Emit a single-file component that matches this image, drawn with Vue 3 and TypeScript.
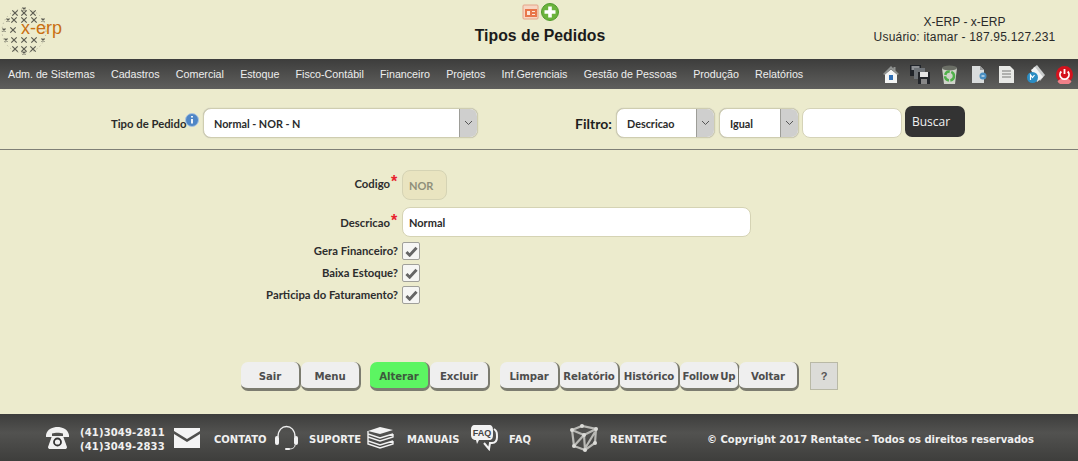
<script setup lang="ts">
const menu: string[] = ['Adm. de Sistemas','Cadastros','Comercial','Estoque','Fisco-Contábil','Financeiro','Projetos','Inf.Gerenciais','Gestão de Pessoas','Produção','Relatórios']
const checks: string[] = ['Gera Financeiro?','Baixa Estoque?','Participa do Faturamento?']
const crosses: {x:number;y:number;r:number}[] = []
const rows: [number, number[]][] = [
  [7,[24]],[11,[15,24,33]],[18,[8,14,24,34,43]],[28,[4,13]],[38,[6,14,24,34,43]],[47,[15,24,33]],[51,[24]]
]
for (const [y, xs] of rows) for (const x of xs) {
  const edge = x < 9 || x > 42 || y < 9 || y > 49
  crosses.push({x, y, r: edge ? 1.5 : 2.7})
}
</script>

<template>
  <div class="page">
    <header class="top">
      <div class="logo">
        <svg width="64" height="56" viewBox="0 0 64 56">
          <circle cx="24" cy="29" r="22" fill="none" stroke="#a9a894" stroke-width="1" stroke-dasharray="1 3"/>
          <g stroke="#5c5c52" stroke-width="1.200" fill="none">
            <path v-for="(c,i) in crosses" :key="i" :d="`M${c.x-c.r} ${c.y-c.r}L${c.x+c.r} ${c.y+c.r}M${c.x+c.r} ${c.y-c.r}L${c.x-c.r} ${c.y+c.r}`" />
          </g>
        </svg>
        <span class="logo-text">x-erp</span>
      </div>
      <div class="center">
        <div class="center-icons">
          <svg width="18" height="18" viewBox="0 0 18 18">
            <rect x="1" y="2" width="15" height="14" rx="1" fill="#f7d6c2" stroke="#e5a488"/>
            <rect x="3" y="6" width="12" height="8" fill="#e8764a"/>
            <path d="M5 8h3v4H5zM10 8h3v1h-3zM10 11h3v1h-3z" fill="#fbe6d8"/>
          </svg>
          <svg width="18" height="18" viewBox="0 0 18 18">
            <circle cx="9" cy="9" r="8.500" fill="#6cb33c" stroke="#4f9a2c"/>
            <path d="M7.200 3.500h3.600v3.700h3.700v3.600h-3.700v3.700H7.200v-3.700H3.500V7.200h3.700z" fill="#fff"/>
          </svg>
        </div>
        <h1>Tipos de Pedidos</h1>
      </div>
      <div class="user">
        <div>X-ERP - x-ERP</div>
        <div class="user-line">Usuário: itamar - 187.95.127.231</div>
      </div>
    </header>

    <nav class="nav">
      <a v-for="m in menu" :key="m">{{ m }}</a>
      <div class="nav-icons">
        <svg width="18" height="19" viewBox="0 0 18 19"><path d="M9 1 1 9l1.500 1L9 4l6.500 6L17 9 13.500 5.500V2h-2v1.500z" fill="#8f9290"/><path d="M3 9.500 9 4.500l6 5V18H3z" fill="#f4f5f4"/><rect x="7" y="10" width="4" height="5" fill="#2f6fb5"/></svg>
        <svg width="20" height="19" viewBox="0 0 20 19"><rect x="0" y="0" width="11" height="11" fill="#20242a"/><rect x="1.500" y="1" width="8" height="4" fill="#8d9094"/><rect x="4" y="3" width="11" height="11" fill="#6e7378"/><rect x="8" y="7" width="12" height="12" fill="#23262b"/><rect x="10" y="7" width="8" height="5" fill="#e6e6e6"/><rect x="11" y="14" width="6" height="5" fill="#888"/></svg>
        <svg width="17" height="19" viewBox="0 0 17 19"><path d="M1 3h15l-2 16H3z" fill="#cfd3c9"/><ellipse cx="8.500" cy="3" rx="7.500" ry="2.500" fill="#6b6f66"/><circle cx="8.500" cy="11" r="4.500" fill="none" stroke="#4fb04a" stroke-width="2.500" stroke-dasharray="6 1.500"/></svg>
        <svg width="17" height="19" viewBox="0 0 17 19"><path d="M1 1h8l4 4v13H1z" fill="#d9dcdc"/><path d="M9 1v4h4z" fill="#9a9c9c"/><circle cx="12" cy="11" r="3.500" fill="#4a8fc2"/><path d="M10.500 11h3" stroke="#fff"/></svg>
        <svg width="15" height="19" viewBox="0 0 15 19"><path d="M0 1h11l4 4v13H0z" fill="#e8e9e6"/><path d="M3 6h9M3 9h9M3 12h9" stroke="#9d9f9c" stroke-width="1.500"/></svg>
        <svg width="18" height="19" viewBox="0 0 18 19"><path d="M6 3 10 0l8 10-5 6z" fill="#c9cccc"/><path d="M4 5 8 2l8 10-6 5z" fill="#f2f3f3"/><circle cx="5.500" cy="12.500" r="5.500" fill="#2b8dc4"/><path d="M3.500 15V10l2 2.500 2-2.500" stroke="#fff" fill="none" stroke-width="1.200"/></svg>
        <svg width="17" height="19" viewBox="0 0 17 19"><circle cx="8.500" cy="9.500" r="8.500" fill="#d5121d"/><path d="M8.500 13a8.500 8.500 0 0 0-7 3.500 8.500 8.500 0 0 0 14 0 8.500 8.500 0 0 0-7-3.500" fill="#f08088"/><path d="M5.300 6.500a4.500 4.500 0 1 0 6.400 0" fill="none" stroke="#fff" stroke-width="1.800"/><path d="M8.500 4v5" stroke="#fff" stroke-width="1.800"/></svg>
      </div>
    </nav>

    <section class="filters">
      <label class="tipo">Tipo de Pedido</label>
      <svg class="info" width="14" height="14" viewBox="0 0 14 14"><circle cx="7" cy="7" r="6.500" fill="#4f86c6" stroke="#a9c3e0"/><path d="M7 3v1.500M7 6v4.500" stroke="#fff" stroke-width="1.800"/></svg>
      <div class="select sel-tipo"><span>Normal - NOR - N</span><i class="arrow"><svg width="9" height="6" viewBox="0 0 9 6"><path d="m1 1 3.500 3.500L8 1" fill="none" stroke="#555" stroke-width="1"/></svg></i></div>
      <label class="filtro">Filtro:</label>
      <div class="select sel-desc"><span>Descricao</span><i class="arrow"><svg width="9" height="6" viewBox="0 0 9 6"><path d="m1 1 3.500 3.500L8 1" fill="none" stroke="#555" stroke-width="1"/></svg></i></div>
      <div class="select sel-igual"><span>Igual</span><i class="arrow"><svg width="9" height="6" viewBox="0 0 9 6"><path d="m1 1 3.500 3.500L8 1" fill="none" stroke="#555" stroke-width="1"/></svg></i></div>
      <div class="search"></div>
      <button class="buscar">Buscar</button>
    </section>

    <main class="form">
      <div class="row r-cod">
        <label class="lbl">Codigo<b class="req">*</b></label>
        <div class="field cod">NOR</div>
      </div>
      <div class="row r-desc">
        <label class="lbl">Descricao<b class="req">*</b></label>
        <div class="field desc">Normal</div>
      </div>
      <div v-for="c in checks" :key="c" class="row r-check">
        <label class="lbl">{{ c }}</label>
        <div class="check"><svg width="13" height="11" viewBox="0 0 14 12"><path d="m1.500 6.500 3.500 3.500 7.500-8" fill="none" stroke="#666" stroke-width="3.200"/></svg></div>
      </div>
    </main>

    <section class="actions">
      <button class="btn">Sair</button>
      <button class="btn">Menu</button>
      <button class="btn green g1">Alterar</button>
      <button class="btn">Excluir</button>
      <button class="btn g2">Limpar</button>
      <button class="btn">Relatório</button>
      <button class="btn">Histórico</button>
      <button class="btn">Follow Up</button>
      <button class="btn g3">Voltar</button>
      <button class="help">?</button>
    </section>

    <footer class="foot">
      <svg class="f-phone" width="25" height="24" viewBox="0 0 25 24"><path d="M1 9C2 3 8 1 12.500 1S23 3 24 9v2h-6V7.500C15 6.500 10 6.500 7 7.500V11H1z" fill="#f1f1f1"/><path d="M7 10h11l4 11c0 1.500-1 2-2 2H5c-1 0-2-.5-2-2z" fill="#f1f1f1"/><circle cx="12.500" cy="16" r="3.500" fill="none" stroke="#333" stroke-width="1.800"/></svg>
      <div class="phones"><div>(41)3049-2811</div><div>(41)3049-2833</div></div>
      <svg class="f-mail" width="26" height="20" viewBox="0 0 26 20"><path d="M0 0h26v3L13 11 0 3z" fill="#f4f4f4"/><path d="M0 6l13 8 13-8v14H0z" fill="#f4f4f4"/></svg>
      <span class="f-t t-contato">CONTATO</span>
      <svg class="f-head" width="25" height="26" viewBox="0 0 25 26"><path d="M4 12C4 5 8 1.500 12.500 1.500S21 5 21 12" fill="none" stroke="#eee" stroke-width="1.300"/><rect x="1" y="11" width="4" height="9" rx="2" fill="#f2f2f2"/><rect x="20" y="11" width="4" height="9" rx="2" fill="#f2f2f2"/><path d="M21 20c0 3-3 4-6 4" fill="none" stroke="#eee"/><rect x="11" y="23" width="5" height="2" rx="1" fill="#eee"/></svg>
      <span class="f-t t-suporte">SUPORTE</span>
      <svg class="f-books" width="27" height="23" viewBox="0 0 27 23"><path d="M13 1 26 4l-13 4L1 5z" fill="#f2f2f2"/><path d="M1 5v3l12 4 13-4M1 8v3l12 4 13-4V8M1 11v4l12 4 13-4M1 15v3l12 4 13-4v-3" fill="none" stroke="#f2f2f2" stroke-width="1.400"/></svg>
      <span class="f-t t-manuais">MANUAIS</span>
      <svg class="f-faq" width="28" height="27" viewBox="0 0 28 27"><path d="M24 5c3 2 3 4 3 8 0 5-2 6-5 6h-2l-1 6-5-6" fill="none" stroke="#f2f2f2" stroke-width="2"/><path d="M5 1h14c3 0 4 2 4 5v5c0 3-1 5-4 5H9l-2 4-1-4c-3 0-5-2-5-5V6c0-3 1-5 4-5z" fill="#f2f2f2"/><text x="12" y="11.500" text-anchor="middle" font-family="Liberation Sans, sans-serif" font-size="9" font-weight="700" fill="#444">FAQ</text></svg>
      <span class="f-t t-faq">FAQ</span>
      <svg class="f-cube" width="28" height="28" viewBox="0 0 28 28"><g fill="none" stroke="#b9b9b5" stroke-width="2.200"><path d="M2 6 12 2l14 3-1 14-10 7-11-4zM2 6l12 5 12-6M14 11l1 15M4 22 14 11M14 26 25 8"/></g><g fill="#dcdcd8"><circle cx="2" cy="6" r="2"/><circle cx="12" cy="2" r="2"/><circle cx="26" cy="5" r="2"/><circle cx="14" cy="11" r="2"/><circle cx="25" cy="19" r="2"/><circle cx="15" cy="26" r="2"/><circle cx="4" cy="22" r="2"/></g></svg>
      <span class="f-t t-rentatec">RENTATEC</span>
      <span class="f-t t-copy">© Copyright 2017 Rentatec - Todos os direitos reservados</span>
    </footer>
  </div>
</template>

<style>
html, body { margin: 0; background: #ecebcd; }
</style>

<style scoped>
.page { width: 1078px; height: 461px; background: #ecebcd; display: flex; flex-direction: column; overflow: hidden; font-family: "Open Sans", sans-serif; }
.top { height: 59px; flex: none; display: grid; grid-template-columns: 360px 360px 358px; }
.logo { position: relative; height: 59px; }
.logo svg { display: block; margin-top: 2px; }
.logo-text { position: absolute; left: 21px; top: 17px; font: 18px/22px "Liberation Sans", sans-serif; color: #c96f12; }
.center { display: flex; flex-direction: column; align-items: center; }
.center-icons { display: flex; margin-top: 3px; height: 18px; gap: 1px; }
.center h1 { margin: 5px 0 0; font: 700 15.800px/20px "Liberation Sans", sans-serif; color: #1b1b1b; }
.user { padding: 15px 0 0 153px; text-align: center; width: 183px; font: 12px/15px "Liberation Sans", sans-serif; color: #2a2a2a; white-space: nowrap; }
.user-line { letter-spacing: .2px; }
.nav { height: 30px; flex: none; display: flex; align-items: center; gap: 16.200px; padding-left: 8px; background: linear-gradient(#3d3d3c, #5f5f5d); font: 10.700px "Liberation Sans", sans-serif; color: #eee; box-sizing: border-box; }
.nav-icons { margin-left: auto; display: flex; align-items: center; gap: 11px; padding-right: 5px; }
.nav-icons svg { display: block; }
.nav-icons svg:nth-child(2) { margin-left: -1px; }
.nav-icons svg:nth-child(4), .nav-icons svg:nth-child(6) { margin-left: 2px; }
.filters { height: 61px; flex: none; border-bottom: 1px solid #7f7f76; box-sizing: border-box; display: flex; align-items: center; padding: 8px 0 0 111px; }
.tipo { font: 700 11.300px Lato, sans-serif; color: #2b2b2b; width: 74px; white-space: nowrap; }
.info { margin-bottom: 6px; margin-right: 4px; }
.select { height: 30px; box-sizing: border-box; background: #fff; border: 1px solid #cfcdb0; border-radius: 8px; display: flex; align-items: center; justify-content: space-between; padding-left: 10px; font: 700 10.800px Lato, "Open Sans", sans-serif; color: #2b2b2b; overflow: hidden; box-shadow: 0 0 1px #aaa; }
.sel-tipo { width: 275px; }
.filtro { margin-left: 97px; width: 41px; font: 700 14px Lato, sans-serif; color: #1e1e1e; }
.sel-desc { width: 99px; }
.sel-igual { width: 80px; margin-left: 4px; }
.arrow { width: 17px; height: 100%; background: #cfcfce; border-left: 1px solid #9d9d98; display: flex; align-items: center; justify-content: center; }
.search { width: 100px; height: 30px; margin-left: 3px; box-sizing: border-box; background: #fff; border: 1px solid #d5d3b8; border-radius: 8px; }
.buscar { width: 60px; height: 31px; margin-left: 3px; margin-top: -3px; border: 0; border-radius: 7px; background: #333; color: #f1f1f1; font: 12px "Open Sans", sans-serif; text-align: left; padding-left: 7px; }
.form { flex: 1; display: flex; flex-direction: column; }
.row { display: flex; align-items: center; }
.lbl { width: 398px; box-sizing: border-box; text-align: right; font: 700 11.300px Lato, sans-serif; color: #2d2d2d; white-space: nowrap; position: relative; padding-bottom: 2px; }
.req { position: absolute; top: -4px; margin-left: 1px; color: #e8222e; font: 700 16px "Liberation Sans", sans-serif; }
.r-cod, .r-desc { height: 30px; }
.r-cod .lbl, .r-desc .lbl { padding-right: 8px; }
.r-cod .lbl { padding-bottom: 3px; }
.r-desc .lbl { padding-bottom: 0; }
.r-cod { margin-top: 20px; }
.r-desc { margin-top: 7px; }
.r-check { height: 18px; margin-top: 4px; }
.r-desc + .r-check { margin-top: 5px; }
.field { height: 30px; box-sizing: border-box; margin-left: 4px; border-radius: 8px; border: 1px solid #d5d3b4; padding-left: 6px; display: flex; align-items: center; font: 700 11px Lato, sans-serif; }
.cod { width: 45px; background: #e9e4c0; color: #8f8f7a; }
.desc { width: 349px; background: #fff; color: #2b2b2b; }
.check { width: 16px; height: 16px; margin-left: 4px; background: #f6f6f4; border: 1px solid #a0a09a; border-radius: 2px; display: flex; align-items: center; justify-content: center; }
.actions { height: 29px; flex: none; display: flex; align-items: flex-start; padding-left: 241px; margin-bottom: 23px; }
.btn { width: 60px; height: 29px; padding: 3px 0 0; box-sizing: border-box; background: #efefef; border: 0; border-right: 2px solid #7c7c70; border-bottom: 3px solid #7c7c70; border-radius: 7px; font: 700 11.300px "DejaVu Sans Condensed", "Open Sans", sans-serif; color: #4d4d4d; letter-spacing: -0.1px; word-spacing: -2px; white-space: nowrap; }
.g1 { margin-left: 9px; }
.g2 { margin-left: 10px; }
.g3 { margin-left: -1px; }
.green { background: #5cf562; color: #3d5a3d; }
.help { width: 28px; height: 28px; margin-left: 11px; box-sizing: border-box; background: #dcdcd8; border: 1px solid #b9b9a6; color: #555; font: 700 11px "Liberation Sans", sans-serif; padding: 0; }
.foot { height: 47px; flex: none; display: flex; align-items: center; background: linear-gradient(#3d3d3c, #525250 40%, #3e3e3c); color: #f0f0f0; font: 700 10px "DejaVu Sans", sans-serif; }
.foot svg { flex: none; }
.f-t { white-space: nowrap; margin-top: 4px; }
.f-phone { margin-left: 45px; }
.phones { margin-left: 10px; margin-top: 4px; width: 85px; line-height: 14px; letter-spacing: .15px; }
.f-mail { margin-left: 9px; }
.t-contato { margin-left: 14px; width: 54px; }
.f-head { margin-left: 6px; }
.t-suporte { margin-left: 10px; width: 53px; }
.f-books { margin-left: 5px; }
.t-manuais { margin-left: 13px; width: 56px; }
.f-faq { margin-left: 7px; }
.t-faq { margin-left: 11px; width: 25px; }
.f-cube { margin-left: 36px; }
.t-rentatec { margin-left: 12px; width: 58px; }
.t-copy { margin-left: 39px; }
</style>
